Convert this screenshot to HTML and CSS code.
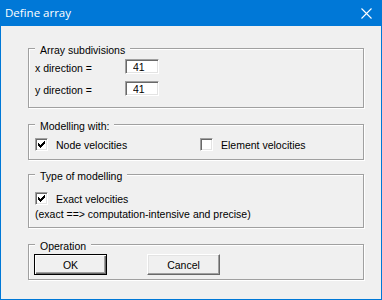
FILE: index.html
```html
<!DOCTYPE html>
<html lang="en">
<head>
    <meta charset="UTF-8">
    <title>Define array</title>
    <link rel="stylesheet" href="styles.css">
</head>
<body>

    <div class="window">
        <div class="titlebar">
            <span class="title">Define array</span>
            <svg class="close" width="11" height="11" viewBox="0 0 11 11">
                <path d="M0.5 0.5L10.5 10.5M10.5 0.5L0.5 10.5" stroke="#fff" stroke-width="1.1" fill="none"/>
            </svg>
        </div>

        <div class="content">
            <div class="group group-array">
                <span class="group-title">Array subdivisions</span>
                <div class="row">
                    <label class="row-label" for="xdir">x direction =</label>
                    <input class="field" type="text" id="xdir" value="41">
                </div>
                <div class="row">
                    <label class="row-label" for="ydir">y direction =</label>
                    <input class="field" type="text" id="ydir" value="41">
                </div>
            </div>

            <div class="group group-model">
                <span class="group-title">Modelling with:</span>
                <div class="checks">
                    <div class="check-item check-node">
                        <span class="check">
                            <svg width="13" height="13" viewBox="0 0 13 13" shape-rendering="crispEdges"><path d="M9 3h1v1h-1zM8 4h2v1h-2zM3 5h1v1h-1zM7 5h3v1h-3zM3 6h2v1h-2zM6 6h3v1h-3zM3 7h5v1h-5zM4 8h3v1h-3zM5 9h1v1h-1z" fill="#000"/></svg>
                        </span>
                        <span>Node velocities</span>
                    </div>
                    <div class="check-item">
                        <span class="check"></span>
                        <span>Element velocities</span>
                    </div>
                </div>
            </div>

            <div class="group group-type">
                <span class="group-title">Type of modelling</span>
                <div class="check-item">
                    <span class="check">
                        <svg width="13" height="13" viewBox="0 0 13 13" shape-rendering="crispEdges"><path d="M9 3h1v1h-1zM8 4h2v1h-2zM3 5h1v1h-1zM7 5h3v1h-3zM3 6h2v1h-2zM6 6h3v1h-3zM3 7h5v1h-5zM4 8h3v1h-3zM5 9h1v1h-1z" fill="#000"/></svg>
                    </span>
                    <span>Exact velocities</span>
                </div>
                <div class="note">(exact ==&gt; computation-intensive and precise)</div>
            </div>

            <div class="group group-op">
                <span class="group-title">Operation</span>
                <div class="buttons">
                    <button class="btn btn-default">OK</button>
                    <button class="btn">Cancel</button>
                </div>
            </div>
        </div>
    </div>

</body>
</html>
```

FILE: styles.css
```css
body {
    margin: 0;
    font-family: "Liberation Sans", Arial, sans-serif;
    font-size: 10.5px;
    color: #000;
}
.window {
    width: 382px;
    height: 300px;
    box-sizing: border-box;
    border: 1px solid #0078d7;
    border-top: none;
    background: #f0f0f0;
}
.titlebar {
    height: 26px;
    background: #0078d7;
    color: #fff;
    display: flex;
    align-items: center;
    justify-content: space-between;
    padding: 0 9px 0 4px;
}
.title {
    font-family: "Open Sans", "Noto Sans", sans-serif;
    font-size: 11.5px;
    padding-bottom: 1px;
}
.content {
    padding: 22px 17px 0 27px;
}
.group {
    position: relative;
    box-sizing: border-box;
    border: 1px solid #a0a0a0;
    box-shadow: inset 1px 1px 0 #fff, 1px 1px 0 #fff;
}
.group-title {
    position: absolute;
    top: -5px;
    left: 6px;
    padding: 0 5px;
    line-height: 13px;
    background: #f0f0f0;
}
.group-array {
    height: 60px;
    padding: 10px 0 0 6px;
}
.group-model {
    height: 36px;
    margin-top: 16px;
    padding: 13px 0 0 6px;
}
.group-type {
    height: 54px;
    margin-top: 14px;
    padding: 17px 0 0 6px;
}
.group-op {
    height: 36px;
    margin-top: 16px;
    padding: 9px 0 0 5px;
}
.row {
    display: flex;
    height: 15px;
    margin-bottom: 7px;
}
.row-label {
    width: 90px;
    line-height: 15px;
    padding-top: 2px;
}
.field {
    box-sizing: border-box;
    width: 34px;
    height: 15px;
    margin: 0;
    padding: 0 0 0 7px;
    border: 1px solid;
    border-color: #a0a0a0 #fff #fff #a0a0a0;
    box-shadow: inset 1px 1px 0 #696969, inset -1px -1px 0 #e3e3e3;
    background: #fff;
    font-family: "Liberation Sans", Arial, sans-serif;
    font-size: 10.5px;
    color: #000;
}
.checks {
    display: flex;
}
.check-node {
    width: 165px;
}
.check-item {
    display: flex;
    align-items: flex-start;
    line-height: 13px;
}
.check-item span:last-child {
    padding-top: 1px;
}
.check {
    width: 13px;
    height: 13px;
    box-sizing: border-box;
    margin-right: 8px;
    border: 1px solid;
    border-color: #a0a0a0 #fff #fff #a0a0a0;
    box-shadow: inset 1px 1px 0 #696969, inset -1px -1px 0 #e3e3e3;
    background: #fff;
}
.check svg {
    display: block;
    margin: -1px 0 0 -1px;
}
.note {
    margin-top: 2px;
    line-height: 13px;
}
.buttons {
    display: flex;
    gap: 40px;
}
.btn {
    width: 73px;
    height: 21px;
    box-sizing: border-box;
    margin: 0;
    padding: 0;
    background: #f0f0f0;
    border: 1px solid;
    border-color: #fff #696969 #696969 #fff;
    box-shadow: inset -1px -1px 0 #a0a0a0, inset 1px 1px 0 #e3e3e3;
    font-family: "Liberation Sans", Arial, sans-serif;
    font-size: 10.5px;
    color: #000;
}
.btn-default {
    border-color: #000;
    box-shadow: inset 1px 1px 0 #fff, inset -1px -1px 0 #696969, inset -2px -2px 0 #a0a0a0;
}
```
